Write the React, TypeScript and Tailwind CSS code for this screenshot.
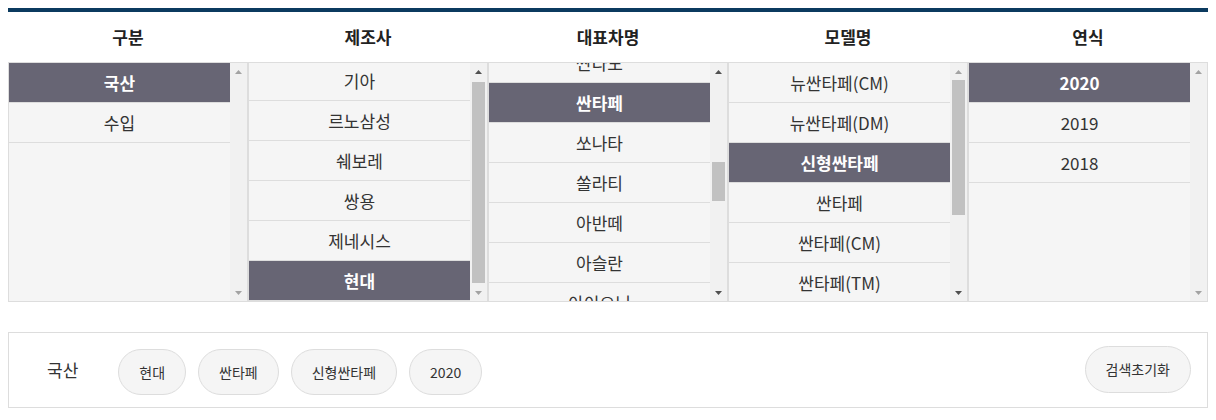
import React from 'react';

interface ListConfig {
  title: string;
  items: string[];
  selected: string;
  offset: string; // negative margin for scrolled lists
  thumb?: { top: string; height: string };
  upOn: boolean;
  downOn: boolean;
}

const columns: ListConfig[] = [
  { title: '구분', items: ['국산', '수입'], selected: '국산', offset: 'mt-0', upOn: false, downOn: false },
  {
    title: '제조사',
    items: ['기아', '르노삼성', '쉐보레', '쌍용', '제네시스', '현대'],
    selected: '현대',
    offset: '-mt-[2px]',
    thumb: { top: 'mt-[2px]', height: 'h-[201px]' },
    upOn: true,
    downOn: false,
  },
  {
    title: '대표차명',
    items: ['싼타모', '싼타페', '쏘나타', '쏠라티', '아반떼', '아슬란', '아이오닉'],
    selected: '싼타페',
    offset: '-mt-[20px]',
    thumb: { top: 'mt-[82px]', height: 'h-[39px]' },
    upOn: true,
    downOn: true,
  },
  {
    title: '모델명',
    items: ['뉴싼타페(CM)', '뉴싼타페(DM)', '신형싼타페', '싼타페', '싼타페(CM)', '싼타페(TM)', '싼타페(DM)', '더 뉴 싼타페'],
    selected: '신형싼타페',
    offset: 'mt-0',
    thumb: { top: 'mt-0', height: 'h-[135px]' },
    upOn: false,
    downOn: true,
  },
  { title: '연식', items: ['2020', '2019', '2018'], selected: '2020', offset: 'mt-0', upOn: false, downOn: false },
];

const chips = ['현대', '싼타페', '신형싼타페', '2020'];

const Arrow: React.FC<{ dir: 'up' | 'down'; on: boolean }> = ({ dir, on }) => (
  <div className="h-[17px] flex items-center justify-center">
    <svg width="7" height="4" viewBox="0 0 7 4">
      <path d={dir === 'up' ? 'M0 4 L3.5 0 L7 4 Z' : 'M0 0 L3.5 4 L7 0 Z'} fill={on ? '#505050' : '#a3a3a3'} />
    </svg>
  </div>
);

const ScrollBar: React.FC<{ col: ListConfig }> = ({ col }) => (
  <div className="w-[17px] shrink-0 bg-[#f1f1f1] flex flex-col">
    <Arrow dir="up" on={col.upOn} />
    <div className="flex-1 px-[2px]">
      {col.thumb && <div className={`${col.thumb.top} ${col.thumb.height} bg-[#c1c1c1]`} />}
    </div>
    <Arrow dir="down" on={col.downOn} />
  </div>
);

const ListBox: React.FC<{ col: ListConfig }> = ({ col }) => (
  <div className="w-[240px] h-[240px] border border-[#dddddd] bg-[#f5f5f5] flex">
    <div className="flex-1 overflow-hidden">
      <ul className={col.offset}>
        {col.items.map((item) => {
          const active = item === col.selected;
          return (
            <li
              key={item}
              className={`h-10 flex items-center justify-center border-b border-[#dddddd] text-[17px] ${
                active ? 'bg-[#676574] text-white font-bold' : 'text-[#333333]'
              }`}
            >
              {item}
            </li>
          );
        })}
      </ul>
    </div>
    <ScrollBar col={col} />
  </div>
);

export default function App() {
  return (
    <div
      className="px-2 pt-2 bg-white min-h-[420px]"
      style={{ fontFamily: '"Noto Sans CJK KR", "Noto Sans", sans-serif' }}
    >
      <div className="h-[4px] bg-[#0b3a5f]" />

      {/* Selector columns */}
      <div className="flex">
        {columns.map((col) => (
          <div key={col.title} className="w-[240px]">
            <div className="h-[50px] flex items-center justify-center text-[17px] font-bold text-[#222222]">
              {col.title}
            </div>
            <ListBox col={col} />
          </div>
        ))}
      </div>

      {/* Selected summary */}
      <div className="mt-[30px] h-[76px] border border-[#dddddd] flex items-center pl-[38px] pr-[16px]">
        <span className="text-[17px] text-[#333333] mr-[40px]">국산</span>
        <div className="flex gap-3 mt-[4px]">
          {chips.map((chip) => (
            <span
              key={chip}
              className="h-[46px] px-[20px] flex items-center rounded-full border border-[#dddddd] bg-[#f5f5f5] text-[14px] text-[#333333]"
            >
              {chip}
            </span>
          ))}
        </div>
        <button className="ml-auto mb-[2px] h-[47px] px-[20px] rounded-full border border-[#dddddd] bg-[#f5f5f5] text-[14px] text-[#333333]">
          검색초기화
        </button>
      </div>
    </div>
  );
}
